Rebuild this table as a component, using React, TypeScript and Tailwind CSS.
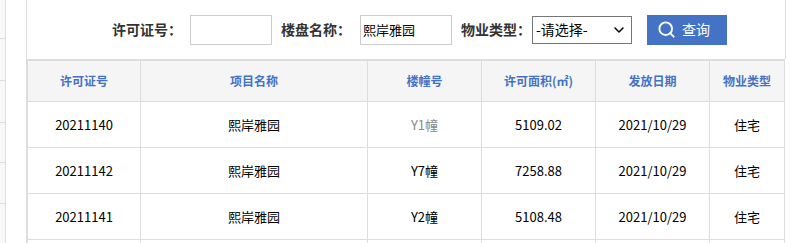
import { ChevronDown, Search } from "lucide-react";

const rows = [
  { no: "20211140", name: "熙岸雅园", building: "Y1幢", area: "5109.02", date: "2021/10/29", type: "住宅", faded: true },
  { no: "20211142", name: "熙岸雅园", building: "Y7幢", area: "7258.88", date: "2021/10/29", type: "住宅" },
  { no: "20211141", name: "熙岸雅园", building: "Y2幢", area: "5108.48", date: "2021/10/29", type: "住宅" },
  { no: "", name: "", building: "", area: "", date: "", type: "" },
];

const headers = ["许可证号", "项目名称", "楼幢号", "许可面积(㎡)", "发放日期", "物业类型"];

const cols = "grid grid-cols-[113px_227px_114px_114px_114px_75px]";

const App = () => {
  return (
    <div
      className="flex h-[243px] w-[790px] overflow-hidden bg-white text-black"
      style={{ fontFamily: '"Microsoft YaHei", "Noto Sans CJK SC", "Liberation Sans", sans-serif' }}
    >
      {/* neighbouring panel edge */}
      <div className="flex w-[6px] shrink-0 flex-col border-r border-[#dddddd] bg-[#f8f8f8]">
        <div className="h-[39px] shrink-0 border-b border-[#dddddd]" />
        <div className="h-[42px] shrink-0 border-b border-[#dddddd]" />
        <div className="h-[42px] shrink-0 border-b border-[#dddddd]" />
        <div className="h-[40px] shrink-0 border-b border-[#dddddd]" />
        <div className="h-[41px] shrink-0 border-b border-[#dddddd]" />
      </div>
      <div className="w-[20px] shrink-0" />

      <div className="flex w-[760px] shrink-0 flex-col">
        {/* search bar */}
        <div className="flex h-[59px] shrink-0 items-center border-x border-[#dddddd] pl-[85px]">
          <span className="text-[14px] font-bold text-[#333333]">许可证号：</span>
          <div className="ml-[8px] h-[30px] w-[82px] border border-[#cccccc] bg-white" />
          <span className="ml-[9px] text-[14px] font-bold text-[#333333]">楼盘名称：</span>
          <div className="ml-[9px] flex h-[30px] w-[92px] items-center border border-[#cccccc] bg-white pl-[2px] text-[13px]">
            熙岸雅园
          </div>
          <span className="ml-[9px] text-[14px] font-bold text-[#333333]">物业类型：</span>
          <div className="ml-[1px] flex h-[28px] w-[100px] items-center justify-between border border-[#767676] bg-white pl-[3px] pr-[4px] text-[14px]">
            <span>-请选择-</span>
            <ChevronDown size={16} strokeWidth={2.2} />
          </div>
          <button
            type="button"
            className="ml-[15px] flex h-[30px] w-[80px] items-center gap-[6px] bg-[#4472c4] pl-[10px] text-[14px] text-white"
          >
            <Search size={19} strokeWidth={2.4} />
            <span>查询</span>
          </button>
        </div>

        {/* result table */}
        <div className="w-[759px] border-l-2 border-t-2 border-[#dddddd]">
          <div className={`${cols} h-[41px] bg-[#f5f5f5]`}>
            {headers.map((h) => (
              <div
                key={h}
                className="flex items-center justify-center border-b border-r border-[#dddddd] text-[12px] font-bold text-[#4472c4]"
              >
                {h}
              </div>
            ))}
          </div>
          {rows.map((r, i) => (
            <div key={i} className={`${cols} h-[46px] text-[13px]`}>
              <div className="flex items-center justify-center border-b border-r border-[#dddddd]">{r.no}</div>
              <div className="flex items-center justify-center border-b border-r border-[#dddddd]">{r.name}</div>
              <div
                className={`flex items-center justify-center border-b border-r border-[#dddddd] ${r.faded ? "text-[#8a8a8a]" : ""}`}
              >
                {r.building}
              </div>
              <div className="flex items-center justify-center border-b border-r border-[#dddddd]">{r.area}</div>
              <div className="flex items-center justify-center border-b border-r border-[#dddddd]">{r.date}</div>
              <div className="flex items-center justify-center border-b border-r border-[#dddddd]">{r.type}</div>
            </div>
          ))}
        </div>
      </div>
    </div>
  );
};

export default App;
